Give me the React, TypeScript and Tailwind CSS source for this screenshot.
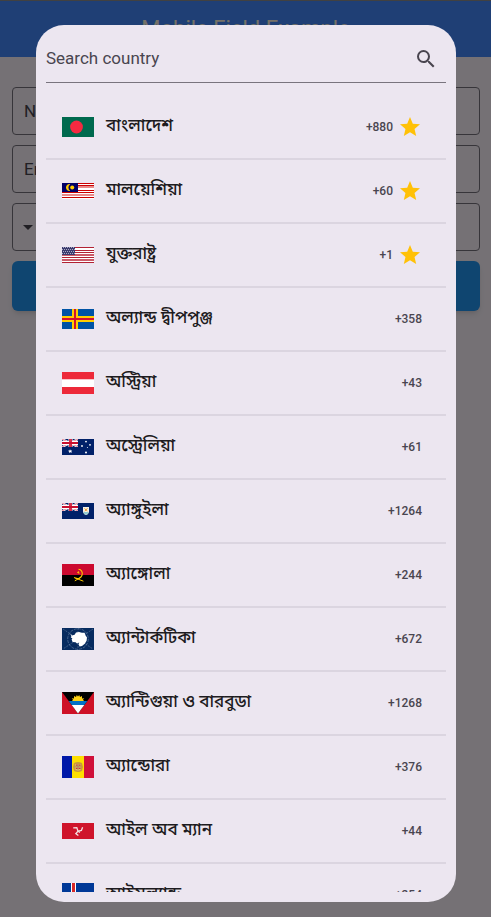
import type { ReactNode } from 'react';
import { MdArrowDropDown, MdSearch, MdStar } from 'react-icons/md';

type Country = {
  name: string;
  code: string;
  flag: ReactNode;
  favourite?: boolean;
};

function Flag({ height, children }: { height: number; children: ReactNode }) {
  return (
    <svg
      width={32}
      height={height}
      viewBox={`0 0 32 ${height}`}
      shapeRendering="crispEdges"
      aria-hidden="true"
      className="shrink-0"
    >
      {children}
    </svg>
  );
}

function UnionJack() {
  return (
    <g>
      <path d="M0 0L16 8M16 0L0 8" stroke="#fff" strokeWidth="2" shapeRendering="auto" />
      <path d="M0 0L16 8M16 0L0 8" stroke="#d8485f" strokeWidth="0.7" shapeRendering="auto" />
      <path d="M8.5 0V8M0 4H16" stroke="#fff" strokeWidth="4" shapeRendering="auto" />
      <path d="M8.5 0V8" stroke="#d42f4a" strokeWidth="3" />
      <path d="M0 4H16" stroke="#c8102e" strokeWidth="2" />
      <path d="M0 8.5H17M16.5 0V9" stroke="#012169" />
    </g>
  );
}

const bangladesh = (
  <Flag height={20}>
    <rect width="32" height="20" fill="#006a4e" />
    <circle cx="14.5" cy="10" r="6.4" fill="#f42a41" shapeRendering="auto" />
  </Flag>
);

const malaysia = (
  <Flag height={16}>
    <rect width="32" height="16" fill="#fff" />
    <path d="M0 0.5H32M0 9.5H32M0 14.5H32M16 7.5H32M16 2.5H32" stroke="#cc0001" />
    <path d="M16 4H32M0 12H32" stroke="#e98a8a" strokeWidth="2" />
    <path d="M16 5.5H32" stroke="#fff" />
    <rect width="16" height="9" fill="#010066" />
    <path d="M8.2 1.2A3.4 3.4 0 1 0 8.2 7.8A3.9 3.9 0 0 1 8.2 1.2Z" fill="#fc0" shapeRendering="auto" />
    <circle cx="10.2" cy="4.5" r="2" fill="#fc0" shapeRendering="auto" />
  </Flag>
);

const unitedStates = (
  <Flag height={16}>
    <rect width="32" height="16" fill="#fff" />
    <path d="M0 0.5H32M0 3.5H32M0 5.5H32M0 10.5H32M0 15.5H32" stroke="#b22234" />
    <path d="M0 8H32M0 13H32" stroke="#cb5b69" strokeWidth="2" />
    <rect width="13" height="8" fill="#3c3b6e" />
    <path
      d="M1 0.5H13M0 2.5H13M1 4.5H13M0 6.5H13"
      stroke="#aaaac6"
      strokeDasharray="1 1"
    />
  </Flag>
);

const aland = (
  <Flag height={20}>
    <rect width="32" height="20" fill="#0053a5" />
    <path d="M13 0V20M0 10H32" stroke="#ffce00" strokeWidth="6" />
    <path d="M13 0V20M0 10H32" stroke="#d21034" strokeWidth="2" />
  </Flag>
);

const austria = (
  <Flag height={22}>
    <rect width="32" height="22" fill="#ed2939" />
    <rect y="7" width="32" height="8" fill="#fff" />
    <path d="M0 7.5H32" stroke="#f9c4c9" />
  </Flag>
);

const australia = (
  <Flag height={16}>
    <rect width="32" height="16" fill="#012169" />
    <UnionJack />
    <g fill="#fff" shapeRendering="auto">
      <path d="M8 10.2L8.7 11.5L10.2 11.4L9.4 12.5L9.9 13.8L8.4 13.3L7.2 14L7.2 12.7L6 11.7L7.5 11.5Z" />
      <circle cx="24" cy="2.6" r="0.9" />
      <circle cx="24" cy="13.4" r="1" />
      <circle cx="20" cy="7" r="0.9" />
      <circle cx="28" cy="5.8" r="0.9" />
      <circle cx="25.4" cy="8.5" r="0.5" />
    </g>
  </Flag>
);

const anguilla = (
  <Flag height={16}>
    <rect width="32" height="16" fill="#012169" />
    <UnionJack />
    <g shapeRendering="auto">
      <path d="M21 4H27V8Q27 11 24 12Q21 11 21 8Z" fill="#f4f1e6" />
      <path d="M21.3 9H26.7Q26 11.3 24 12Q22 11.3 21.3 9Z" fill="#8fcbd2" />
      <path d="M22.5 5.5L25.4 8M25.4 5.3L22.8 8.2" stroke="#f39a2b" strokeWidth="1" />
    </g>
  </Flag>
);

const angola = (
  <Flag height={22}>
    <rect width="32" height="11" fill="#cc092f" />
    <rect y="11" width="32" height="11" />
    <g fill="none" stroke="#ffcb00" shapeRendering="auto">
      <path d="M16.5 5.2C19.5 5.3 21 8.5 20 11.2C19 14 16 15.3 13.4 14" strokeWidth="1.1" />
      <path d="M12 13.5L21.4 17.2M18.8 13.4L12.8 16.8" strokeWidth="1" />
      <path d="M16.4 7.4L17.2 9.4L15.4 8.6Z" fill="#ffcb00" strokeWidth="0.6" />
    </g>
  </Flag>
);

const antarctica = (
  <Flag height={22}>
    <rect width="32" height="22" fill="#072b5f" />
    <g shapeRendering="auto">
      <path d="M1 1L31 21M31 1L1 21M16 0V22" stroke="#5e7a9f" strokeWidth="0.6" strokeDasharray="2 1" />
      <circle cx="16" cy="11" r="10.3" fill="none" stroke="#6f88aa" strokeWidth="0.6" strokeDasharray="3 1" />
      <path
        d="M8.2 5.6L10 7.6L12.6 6.8L14 4.6L17 4L20 4.8L22.6 4.8L23.6 7.4L25 9.6L24.6 12.8L22.8 15.8L20 18L17.6 18.6L16.6 16.6L17.2 14.6L15 15.4L13.6 14.2L10.6 14L9.6 11.6L10.4 10.2L8.8 9.4L9.4 8.2Z"
        fill="#fff"
      />
    </g>
  </Flag>
);

const antigua = (
  <Flag height={22}>
    <rect width="32" height="22" fill="#ce1126" />
    <g shapeRendering="auto">
      <path d="M0 0H32L16 21.4Z" fill="#000" />
      <path
        d="M10 9L11 7.8L9.8 6.2L12 6.4L12 4L14 5L14.8 3L16 4.6L17.2 3L18 5L20 4L20 6.4L22.2 6.2L21 7.8L22 9Z"
        fill="#fcd116"
      />
      <path d="M6.7 9H25.3L22.3 13H9.7Z" fill="#0072c6" />
      <path d="M9.7 13H22.3L16 21.4Z" fill="#fff" />
    </g>
  </Flag>
);

const andorra = (
  <Flag height={22}>
    <rect width="32" height="22" fill="#0018a8" />
    <rect x="10" width="12" height="22" fill="#fedf00" />
    <rect x="22" width="10" height="22" fill="#d0103a" />
    <g shapeRendering="auto">
      <path d="M12 7Q16 4.8 20 7L21 11L20 15Q16 17 12 15L11 11Z" fill="#c99a3a" />
      <path d="M13.2 8H18.8V13.6Q16 15.4 13.2 13.6Z" fill="#e8c46a" />
      <path d="M13.8 9.2H15.6M16.6 9.2H18.6M13.8 12.4H15.6M16.6 12.4H18.6" stroke="#c6363c" strokeWidth="1.2" />
      <path d="M13 10.8H19M16 8V14" stroke="#8d6b52" strokeWidth="0.6" />
    </g>
  </Flag>
);

const isleOfMan = (
  <Flag height={16}>
    <rect width="32" height="16" fill="#cf142b" />
    <g fill="none" stroke="#f3dfe1" strokeWidth="1.3" shapeRendering="auto">
      <path d="M16 8.2L14.8 4.6L11.2 4.8" />
      <path d="M16 8.2L19.4 7.4L20.6 4.2" />
      <path d="M16 8.2L13.8 10.6L16.4 12.6" />
      <path d="M16 8.2L18 9.4" />
    </g>
  </Flag>
);

const iceland = (
  <Flag height={24}>
    <rect width="32" height="24" fill="#003897" />
    <path d="M11.5 0V24M0 12H32" stroke="#fff" strokeWidth="5" />
    <path d="M11.5 0V24M0 12H32" stroke="#d72828" strokeWidth="3" />
  </Flag>
);

const countries: Country[] = [
  { name: 'বাংলাদেশ', code: '+880', flag: bangladesh, favourite: true },
  { name: 'মালয়েশিয়া', code: '+60', flag: malaysia, favourite: true },
  { name: 'যুক্তরাষ্ট্র', code: '+1', flag: unitedStates, favourite: true },
  { name: 'অল্যান্ড দ্বীপপুঞ্জ', code: '+358', flag: aland },
  { name: 'অস্ট্রিয়া', code: '+43', flag: austria },
  { name: 'অস্ট্রেলিয়া', code: '+61', flag: australia },
  { name: 'অ্যাঙ্গুইলা', code: '+1264', flag: anguilla },
  { name: 'অ্যাঙ্গোলা', code: '+244', flag: angola },
  { name: 'অ্যান্টার্কটিকা', code: '+672', flag: antarctica },
  { name: 'অ্যান্টিগুয়া ও বারবুডা', code: '+1268', flag: antigua },
  { name: 'অ্যান্ডোরা', code: '+376', flag: andorra },
  { name: 'আইল অব ম্যান', code: '+44', flag: isleOfMan },
  { name: 'আইসল্যান্ড', code: '+354', flag: iceland },
];

function CountryRow({ country }: { country: Country }) {
  return (
    <li className="border-b-2 border-[#dbd5e0]">
      <button type="button" className="flex h-[62px] w-full items-center pr-6 pl-4 text-left">
        {country.flag}
        <span className="ml-3 flex-1 font-['Noto_Sans_Bengali','Noto_Sans',sans-serif] text-[17px] font-medium text-[#1d1b20]">
          {country.name}
        </span>
        <span className="text-xs font-medium text-[#49454f]">{country.code}</span>
        {country.favourite && <MdStar className="ml-[5px] size-6 text-[#ffc107]" aria-hidden="true" />}
      </button>
    </li>
  );
}

function CountryDialog() {
  return (
    <div className="fixed inset-0 flex justify-center bg-black/54 pt-[25px] pr-[35px] pb-[15px] pl-9">
      <div
        role="dialog"
        aria-modal="true"
        aria-label="Country"
        className="flex w-full max-w-[560px] flex-col rounded-[28px] bg-[#ece6f0] p-[10px]"
      >
        <label className="flex h-12 shrink-0 items-center border-b border-[#79747e] pr-2">
          <input
            type="text"
            aria-label="Search country"
            placeholder="Search country"
            className="min-w-0 flex-1 bg-transparent text-[17px] text-[#49454f] outline-none placeholder:text-[#49454f]"
          />
          <MdSearch className="size-6 text-[#49454f]" aria-hidden="true" />
        </label>
        <ul className="mt-[13px] min-h-0 flex-1 overflow-y-auto [scrollbar-width:none]">
          {countries.map((country) => (
            <CountryRow key={country.code} country={country} />
          ))}
        </ul>
      </div>
    </div>
  );
}

export default function App() {
  return (
    <div className="min-h-screen border-t border-[#8f8f8f] bg-[#fef7ff] font-['Roboto',sans-serif]">
      <header className="flex h-14 items-center justify-center bg-[#448aff] pb-0.5">
        <h1 className="text-[22px] text-[#fff7e0]">Mobile Field Example</h1>
      </header>
      <form className="flex flex-col gap-[10px] pt-[30px] pr-[11px] pl-3">
        <input
          type="text"
          aria-label="Name"
          placeholder="Name"
          className="h-12 w-full rounded border border-[#79747e] px-[11px] text-[17px] placeholder:text-[#49454f]"
        />
        <input
          type="email"
          aria-label="Email"
          placeholder="Email"
          className="h-12 w-full rounded border border-[#79747e] px-[11px] text-[17px] placeholder:text-[#49454f]"
        />
        <div className="flex h-12 w-full items-center rounded border border-[#79747e] pl-[3px]">
          <button type="button" aria-label="Choose country">
            <MdArrowDropDown className="size-6 text-[#49454f]" />
          </button>
          <input type="tel" aria-label="Mobile number" className="min-w-0 flex-1" />
        </div>
        <button
          type="button"
          aria-label="Submit"
          className="h-[50px] w-full rounded-md bg-[#2196f3] shadow-md"
        />
      </form>
      <CountryDialog />
    </div>
  );
}
